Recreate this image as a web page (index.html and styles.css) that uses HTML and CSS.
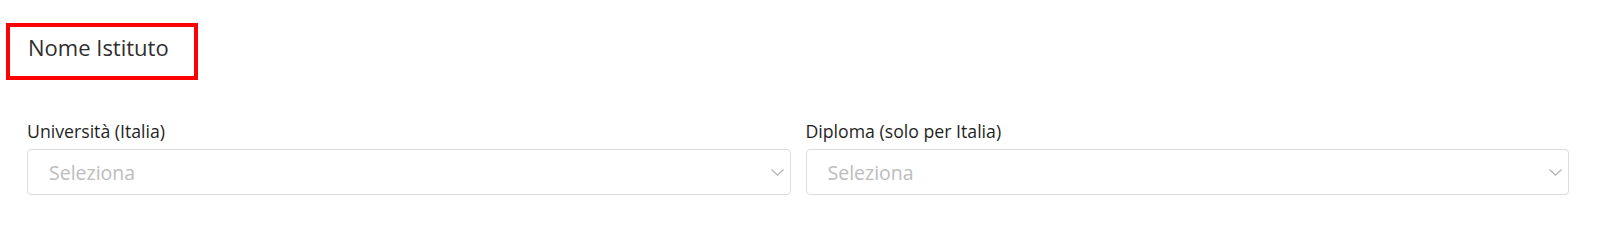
FILE: index.html
```html
<!DOCTYPE html>
<html lang="it">
<head>
<meta charset="utf-8">
<title>Nome Istituto</title>
<link rel="stylesheet" href="styles.css">
</head>
<body>
<div class="page">
  <div class="title-box">
    <h2 class="title">Nome Istituto</h2>
  </div>
  <div class="fields">
    <div class="field">
      <label class="label">Università (Italia)</label>
      <div class="select">
        <span class="placeholder">Seleziona</span>
        <svg class="chevron" width="13" height="7" viewBox="0 0 13 7"><path d="M0.5 0.5 L6.5 6.2 L12.5 0.5" fill="none" stroke="#b3b3b3" stroke-width="1.2"/></svg>
      </div>
    </div>
    <div class="field">
      <label class="label">Diploma (solo per Italia)</label>
      <div class="select">
        <span class="placeholder">Seleziona</span>
        <svg class="chevron" width="13" height="7" viewBox="0 0 13 7"><path d="M0.5 0.5 L6.5 6.2 L12.5 0.5" fill="none" stroke="#b3b3b3" stroke-width="1.2"/></svg>
      </div>
    </div>
  </div>
</div>
</body>
</html>
```

FILE: styles.css
```css
* { box-sizing: border-box; }
html, body { margin: 0; padding: 0; background: #fff; }
body { font-family: "Open Sans", "Liberation Sans", sans-serif; color: #333; }
.page { padding: 23px 31px 0 27px; }
.title-box {
  width: 192px;
  height: 57px;
  margin-left: -21px;
  border: 4px solid #ff0000;
  padding: 5px 0 0 18px;
}
.title {
  margin: 0;
  font-size: 22px;
  line-height: 30px;
  font-weight: 500;
  color: #2f2f2f;
}
.fields {
  display: grid;
  grid-template-columns: 1fr 1fr;
  column-gap: 15px;
  margin-top: 39px;
}
.field { display: flex; flex-direction: column; }
.label {
  font-size: 17.7px;
  line-height: 24px;
  font-weight: 500;
  color: #1f1f1f;
  margin-bottom: 6px;
}
.select {
  height: 46px;
  border: 1px solid #dcdcdc;
  border-radius: 4px;
  display: flex;
  align-items: center;
  justify-content: space-between;
  padding: 0 6px 0 21px;
}
.placeholder {
  font-size: 19.5px;
  color: #bdbdbd;
}
.chevron { display: block; }
```
